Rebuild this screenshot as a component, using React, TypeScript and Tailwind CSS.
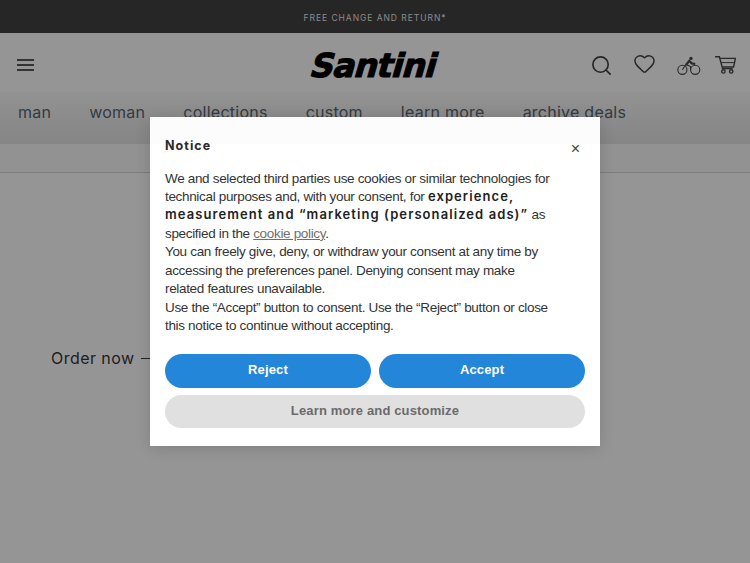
import React from "react";
import { Search, Heart } from "lucide-react";

const navItems = ["man", "woman", "collections", "custom", "learn more", "archive deals"];

function Rider() {
  return (
    <svg width="24" height="20" viewBox="0 0 24 20" fill="none" stroke="#2a2a2a" strokeWidth="1.1" aria-hidden="true">
      <circle cx="5.4" cy="13.8" r="4.6" />
      <circle cx="18.2" cy="13.8" r="4.6" />
      <path d="M5.4 13.8 9 8.5l4.5 2v3.5" />
      <path d="M9 9 12.2 4.8l2.6 2.6 3.4.6" strokeWidth="2.2" />
      <circle cx="14" cy="2.4" r="1.7" fill="#2a2a2a" stroke="none" />
    </svg>
  );
}

function Cart() {
  return (
    <svg width="21" height="18" viewBox="0 0 21 18" fill="none" stroke="#2a2a2a" strokeWidth="1.4" aria-hidden="true">
      <path d="M0 .8h4.4L7.6 12.6h10" />
      <path d="M4.6 2.4H20.4L18.6 11H7.2" />
      <path d="M5.8 6.6h13.4" strokeWidth="1" />
      <circle cx="8.4" cy="15.4" r="1.7" />
      <circle cx="16.2" cy="15.4" r="1.7" />
    </svg>
  );
}

export default function App() {
  return (
    <div className="relative h-[563px] w-[750px] overflow-hidden bg-[#959595] font-['Liberation_Sans',sans-serif]">
      <div className="flex h-[33px] items-center justify-center bg-[#262626] pt-[3px] font-['Inter',sans-serif] text-[8.5px] tracking-[0.95px] text-[#8c8c8c]">
        FREE CHANGE AND RETURN*
      </div>

      <header className="relative flex h-[59px] items-center justify-between pl-[17px] pr-[14px] pt-[5px]">
        <div className="flex w-[17px] flex-col gap-[3.5px]">
          <span className="h-[1.5px] bg-[#333]" />
          <span className="h-[1.5px] bg-[#333]" />
          <span className="h-[1.5px] bg-[#333]" />
        </div>
        <div className="absolute left-[306px] top-[15px] w-[136px] -skew-x-[16deg] text-center font-['DejaVu_Sans',sans-serif] text-[33px] leading-[36px] font-bold tracking-[-0.9px] text-black [-webkit-text-stroke:1px_black]">
          Santini
        </div>
        <div className="flex items-center">
          <Search size={23} strokeWidth={1.7} color="#262626" />
          <Heart size={23} strokeWidth={1.5} color="#262626" className="-mt-[3px] ml-[20px]" />
          <span className="ml-[21px] mt-[2px]"><Rider /></span>
          <span className="ml-[14px] -mt-[1px]"><Cart /></span>
        </div>
      </header>

      <nav className="flex h-[52px] gap-[38px] bg-gradient-to-b from-[#929292] to-[#858585] pl-[18px] pt-[8px] font-['Inter',sans-serif] text-[16px] leading-[24px] tracking-[0.25px] text-[#333a42]">
        {navItems.map((item) => (
          <span key={item}>{item}</span>
        ))}
      </nav>

      <div className="h-[29px] border-b border-[#7c7c7c] bg-[#929292]" />

      <div className="mt-[173px] flex items-center pl-[51px] font-['Inter',sans-serif] text-[16px] leading-[24px] tracking-[0.45px] text-[#1d1d1d]">
        Order now
        <span className="ml-[6px] h-px w-[14px] bg-[#222]" />
      </div>

      <div className="absolute left-[150px] top-[117px] h-[329px] w-[450px] bg-white px-[15px] pt-[21px] shadow-[0_2px_14px_rgba(0,0,0,0.14)]">
        <div className="absolute left-0 right-0 top-0 h-[27px] bg-[#fcfcfc]" />
        <div className="relative flex items-start justify-between">
          <h2 className="font-['Inter',sans-serif] text-[12.5px] leading-[16px] font-bold tracking-[1.05px] text-[#2b2b2b]">Notice</h2>
          <span className="mr-[5px] mt-[2px] text-[16px] leading-[18px] text-[#444]">×</span>
        </div>
        <div className="mt-[11.5px] w-[390px] text-[13.5px] leading-[18.45px] tracking-[-0.33px] text-[#333]">
          <p>
            We and selected third parties use cookies or similar technologies for technical purposes and, with your consent, for{" "}
            <b className="font-['Inter',sans-serif] text-[13px] leading-[1] font-semibold tracking-[1.08px] text-[#222]">experience, measurement and “marketing (personalized ads)”</b>{" "}
            as specified in the <a className="text-[#6f6f6f] underline">cookie policy</a>.
          </p>
          <p>You can freely give, deny, or withdraw your consent at any time by accessing the preferences panel. Denying consent may make related features unavailable.</p>
          <p>Use the “Accept” button to consent. Use the “Reject” button or close this notice to continue without accepting.</p>
        </div>
        <div className="mt-[18.5px] grid grid-cols-2 gap-x-[8px] gap-y-[7px] text-[13px] font-bold">
          <button className="h-[34px] rounded-full bg-[#2486d9] pb-[3px] tracking-[0.15px] text-white">Reject</button>
          <button className="h-[34px] rounded-full bg-[#2486d9] pb-[3px] tracking-[0.15px] text-white">Accept</button>
          <button className="col-span-2 h-[33px] rounded-full bg-[#e0e0e0] pb-[2px] tracking-[0.15px] text-[#6b6b6b]">Learn more and customize</button>
        </div>
      </div>
    </div>
  );
}
